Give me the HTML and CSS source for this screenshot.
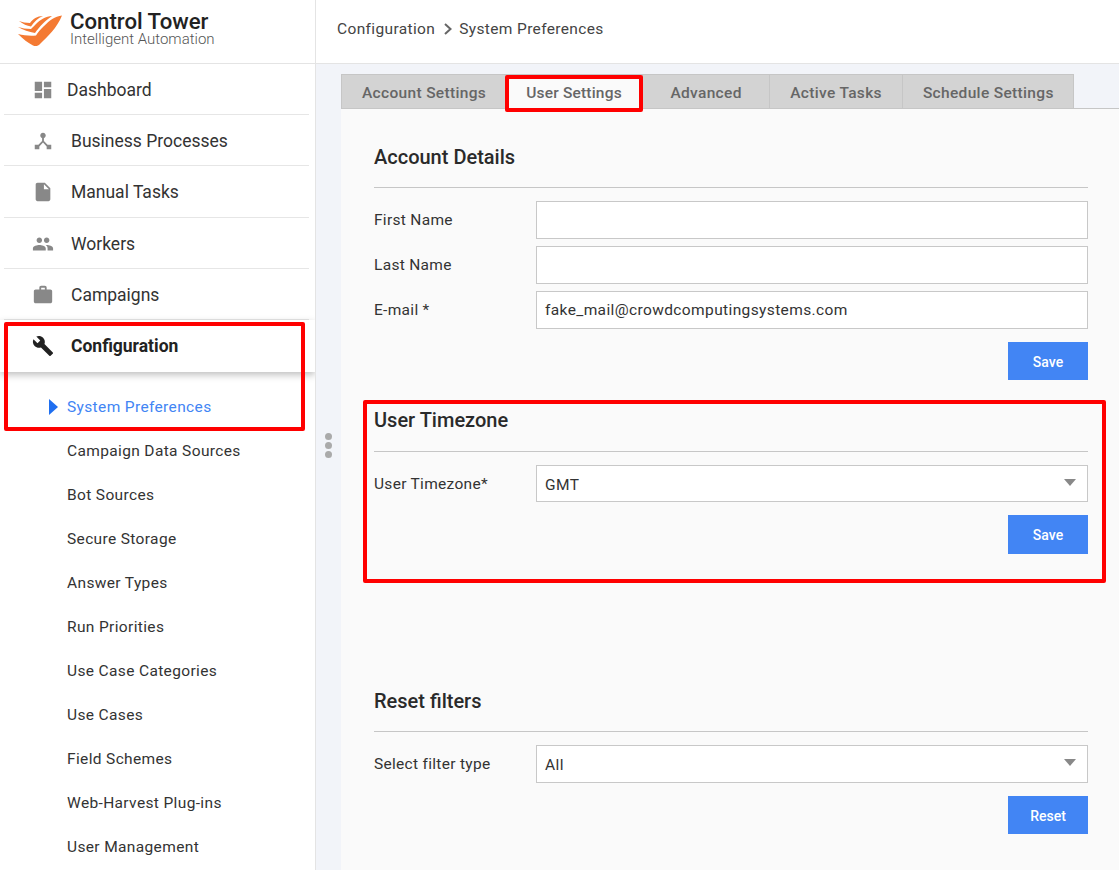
FILE: index.html
```html
<!DOCTYPE html>
<html lang="en">
<head>
  <meta charset="UTF-8">
  <meta name="viewport" content="width=device-width, initial-scale=1.0">
  <title>System Preferences</title>
  <link rel="stylesheet" href="styles.css">
</head>
<body>
  <div class="app">
    <aside class="sidebar">
      <div class="brand">
        <svg class="logo" viewBox="17 12 46 33">
          <path d="M18 32C23 37 28 41 33 43.500C36 44.700 38 44 40 42C48 34 57 26 62 13.500C55 14 49 19 44 24C41 27 38 30 36 33.500C30 34 24 33.500 18 32z" fill="#f47a33"/>
          <path d="M18 25C23 28 29 30 35 31C39 25 46 18 52 14C46 14 40 18 36 22C33 25 32 26 31 27C26 27 22 26 18 25z" fill="#f47a33"/>
          <path d="M19 19C23 22 27 24 31 24.500C34 20 38 16 43 14C37 14 33 17 30 21C26 21 22 20 19 19z" fill="#f47a33"/>
        </svg>
        <div class="brand-text">
          <div class="brand-name">Control Tower</div>
          <div class="brand-sub">Intelligent Automation</div>
        </div>
      </div>

      <nav>
        <a class="nav-item first">
          <svg viewBox="0 0 24 24"><path d="M3 13h8V3H3v10zm0 8h8v-6H3v6zm10 0h8V11h-8v10zm0-18v6h8V3h-8z"/></svg>
          <span>Dashboard</span>
        </a>
        <a class="nav-item">
          <svg viewBox="0 0 24 24"><path d="M17 16l-4-4V8.820C14.160 8.400 15 7.300 15 6c0-1.660-1.340-3-3-3S9 4.340 9 6c0 1.300.840 2.400 2 2.820V12l-4 4H3v5h5v-3.050l4-4.200 4 4.200V21h5v-5h-4z"/></svg>
          <span>Business Processes</span>
        </a>
        <a class="nav-item">
          <svg viewBox="0 0 24 24"><path d="M6 2c-1.100 0-1.990.900-1.990 2L4 20c0 1.100.890 2 1.990 2H18c1.100 0 2-.900 2-2V8l-6-6H6zm7 7V3.500L18.500 9H13z"/></svg>
          <span>Manual Tasks</span>
        </a>
        <a class="nav-item">
          <svg viewBox="0 0 24 24"><path d="M16 11c1.660 0 2.990-1.340 2.990-3S17.660 5 16 5c-1.660 0-3 1.340-3 3s1.340 3 3 3zm-8 0c1.660 0 2.990-1.340 2.990-3S9.660 5 8 5C6.340 5 5 6.340 5 8s1.340 3 3 3zm0 2c-2.330 0-7 1.170-7 3.500V19h14v-2.500c0-2.330-4.670-3.500-7-3.500zm8 0c-.290 0-.620.020-.970.050 1.160.840 1.970 1.970 1.970 3.450V19h6v-2.500c0-2.330-4.670-3.500-7-3.500z"/></svg>
          <span>Workers</span>
        </a>
        <a class="nav-item">
          <svg viewBox="0 0 24 24"><path d="M20 6h-4V4c0-1.110-.890-2-2-2h-4c-1.110 0-2 .890-2 2v2H4c-1.110 0-1.990.890-1.990 2L2 19c0 1.110.890 2 2 2h16c1.110 0 2-.890 2-2V8c0-1.110-.890-2-2-2zm-6 0h-4V4h4v2z"/></svg>
          <span>Campaigns</span>
        </a>
        <a class="nav-item active">
          <svg viewBox="0 0 24 24"><path d="M22.700 19l-9.100-9.100c.900-2.300.400-5-1.500-6.900-2-2-5-2.400-7.400-1.300L9 6 6 9 1.600 4.700C.400 7.100.900 10.100 2.900 12.100c1.900 1.900 4.600 2.400 6.900 1.500l9.100 9.100c.400.400 1 .400 1.400 0l2.300-2.300c.500-.400.500-1.100.100-1.400z"/></svg>
          <span>Configuration</span>
        </a>
      </nav>

      <ul class="subnav">
        <li class="current">System Preferences</li>
        <li>Campaign Data Sources</li>
        <li>Bot Sources</li>
        <li>Secure Storage</li>
        <li>Answer Types</li>
        <li>Run Priorities</li>
        <li>Use Case Categories</li>
        <li>Use Cases</li>
        <li>Field Schemes</li>
        <li>Web-Harvest Plug-ins</li>
        <li>User Management</li>
      </ul>
    </aside>

    <div class="main">
      <header class="topbar">
        <span>Configuration</span>
        <svg class="crumb-arrow" viewBox="0 0 8 12"><path d="M1 1l5.500 5L1 11" fill="none" stroke="#666" stroke-width="2"/></svg>
        <span>System Preferences</span>
      </header>

      <div class="content">
        <div class="handle"><i></i><i></i><i></i></div>

        <div class="tabs">
          <div class="tab">Account Settings</div>
          <div class="tab selected">User Settings</div>
          <div class="tab wide">Advanced</div>
          <div class="tab">Active Tasks</div>
          <div class="tab last">Schedule Settings</div>
        </div>

        <div class="panel">
          <section class="account">
            <h2>Account Details</h2>
            <div class="field"><label>First Name</label><div class="input"></div></div>
            <div class="field"><label>Last Name</label><div class="input"></div></div>
            <div class="field"><label>E-mail *</label><div class="input">fake_mail@crowdcomputingsystems.com</div></div>
            <div class="actions"><button>Save</button></div>
          </section>

          <section class="timezone">
            <h2>User Timezone</h2>
            <div class="field"><label>User Timezone*</label><div class="input select">GMT</div></div>
            <div class="actions"><button>Save</button></div>
          </section>

          <section class="filters">
            <h2>Reset filters</h2>
            <div class="field"><label>Select filter type</label><div class="input select">All</div></div>
            <div class="actions"><button>Reset</button></div>
          </section>
        </div>
      </div>
    </div>

    <!-- red annotation boxes -->
    <div class="mark mark-tab"></div>
    <div class="mark mark-nav"></div>
    <div class="mark mark-zone"></div>
  </div>
</body>
</html>
```

FILE: styles.css
```css
* {
  box-sizing: border-box;
}
html, body {
  margin: 0;
  height: 100%;
  overflow: hidden;
}
body {
  font-family: Roboto, Arial, sans-serif;
  color: #333;
  background: #f2f4f9;
}
.app {
  position: relative;
  display: flex;
  width: 1119px;
  height: 870px;
  overflow: hidden;
}

/* Sidebar */
.sidebar {
  width: 316px;
  flex: none;
  overflow: hidden;
  background: #fff;
  border-right: 1px solid #e4e4e4;
}
.brand {
  display: flex;
  align-items: center;
  height: 64px;
  padding: 0 0 8px 17px;
  border-bottom: 1px solid #e4e4e4;
}
.logo {
  width: 46px;
  height: 33px;
  flex: none;
  margin-top: 5px;
}
.brand-text {
  margin-left: 7px;
}
.brand-name {
  font-size: 22.2px;
  font-weight: 500;
  line-height: 22px;
  color: #222;
}
.brand-sub {
  font-size: 15px;
  font-weight: 300;
  line-height: 14px;
  color: #555;
}
.nav-item {
  display: flex;
  align-items: center;
  height: 51.3px;
  margin: 0 6px 0 4px;
  padding: 2px 0 0 27.5px;
  border-bottom: 1px solid #e6e6e6;
  font-size: 17.5px;
  color: #333;
}
.nav-item svg {
  width: 22px;
  height: 22px;
  flex: none;
  fill: #888;
  margin-right: 17.5px;
}
.nav-item.first {
  height: 51px;
}
.nav-item.first svg {
  margin-right: 13.5px;
}
.nav-item.active {
  margin: 0;
  padding: 0 0 0 31.5px;
  width: 315px;
  height: 52px;
  font-weight: 700;
  color: #222;
  border-bottom: 0;
  box-shadow: 0 3px 7px rgba(0, 0, 0, 0.25);
  position: relative;
}
.nav-item.active svg {
  fill: #222;
}
.subnav {
  list-style: none;
  margin: 0;
  padding: 13px 0 0 67px;
}
.subnav li {
  height: 44px;
  line-height: 44px;
  font-size: 15.5px;
  letter-spacing: 0.36px;
  color: #333;
}
.subnav .current {
  position: relative;
  color: #4285f4;
}
.subnav .current::before {
  content: "";
  position: absolute;
  left: -18px;
  top: 14px;
  border-left: 9px solid #1f6ff0;
  border-top: 8px solid transparent;
  border-bottom: 8px solid transparent;
}

/* Main column */
.main {
  flex: 1;
  min-width: 0;
}
.topbar {
  display: flex;
  align-items: center;
  height: 64px;
  padding: 0 0 6px 21px;
  background: #fff;
  border-bottom: 1px solid #e4e4e4;
  font-size: 15.5px;
  letter-spacing: 0.36px;
  color: #444;
}
.crumb-arrow {
  width: 8px;
  height: 12px;
  margin: 0 7px 0 9px;
}
.content {
  position: relative;
  padding: 10px 0 0 25px;
}
.handle {
  position: absolute;
  left: 9px;
  top: 369px;
  display: flex;
  flex-direction: column;
  gap: 2px;
}
.handle i {
  width: 7px;
  height: 7px;
  border-radius: 50%;
  background: #aaa;
}
.tabs {
  display: flex;
  height: 34px;
}
.tab {
  padding: 0 20px;
  line-height: 36px;
  font-size: 15.5px;
  font-weight: 500;
  letter-spacing: 0.33px;
  color: #666;
  background: #d3d3d3;
  border: 1px solid #c6c6c6;
  border-width: 1px 1px 0 0;
}
.tab:first-child {
  border-left-width: 1px;
}
.tab.selected {
  padding: 0 20px 0 19px;
  background: #fafafa;
  letter-spacing: 0.2px;
  margin-bottom: -1px;
  position: relative;
  z-index: 1;
}
.tab.wide {
  padding: 0 27.5px;
}
.tab.last {
  padding: 0 19px 0 20px;
}
.panel {
  height: 780px;
  padding: 0 31px 0 33px;
  background: #fafafa;
  border-top: 1px solid #c6c6c6;
}
h2 {
  margin: 0;
  height: 44px;
  font-size: 20px;
  font-weight: 500;
  line-height: 24px;
  color: #2a2a2a;
  border-bottom: 1px solid #c6c6c6;
}
.account {
  padding-top: 36px;
}
.account h2 {
  height: 43px;
}
.timezone {
  padding-top: 21px;
}
.timezone h2 {
  height: 51px;
  padding-top: 7px;
}
.timezone .input {
  height: 37px;
}
.timezone button {
  height: 39px;
  padding-top: 0;
}
.filters {
  padding-top: 135px;
}
.filters h2 {
  height: 43px;
}
.field {
  display: flex;
  align-items: center;
  margin-top: 13px;
}
.field + .field {
  margin-top: 7px;
}
.field label {
  width: 162px;
  flex: none;
  font-size: 15.5px;
  letter-spacing: 0.3px;
  color: #333;
}
.input {
  flex: 1;
  height: 38px;
  padding: 0 8px;
  line-height: 36px;
  font-size: 15.5px;
  letter-spacing: 0.38px;
  background: #fff;
  border: 1px solid #c8c8c8;
}
.select {
  position: relative;
  line-height: 38px;
}
.select::after {
  content: "";
  position: absolute;
  right: 11px;
  top: 13px;
  border-top: 7px solid #888;
  border-left: 6px solid transparent;
  border-right: 6px solid transparent;
}
.actions {
  display: flex;
  justify-content: flex-end;
  margin-top: 13px;
}
button {
  width: 80px;
  height: 38px;
  padding: 2px 0 0;
  font-family: inherit;
  font-size: 14px;
  font-weight: 500;
  color: #fff;
  background: #4285f4;
  border: none;
}

/* Red annotation boxes */
.mark {
  position: absolute;
  z-index: 2;
  border: 4px solid #f00;
  border-radius: 2px;
}
.mark-tab {
  left: 505px;
  top: 75px;
  width: 138px;
  height: 37px;
}
.mark-nav {
  left: 4px;
  top: 322px;
  width: 301px;
  height: 109px;
}
.mark-zone {
  left: 363px;
  top: 400px;
  width: 743px;
  height: 183px;
}
```
